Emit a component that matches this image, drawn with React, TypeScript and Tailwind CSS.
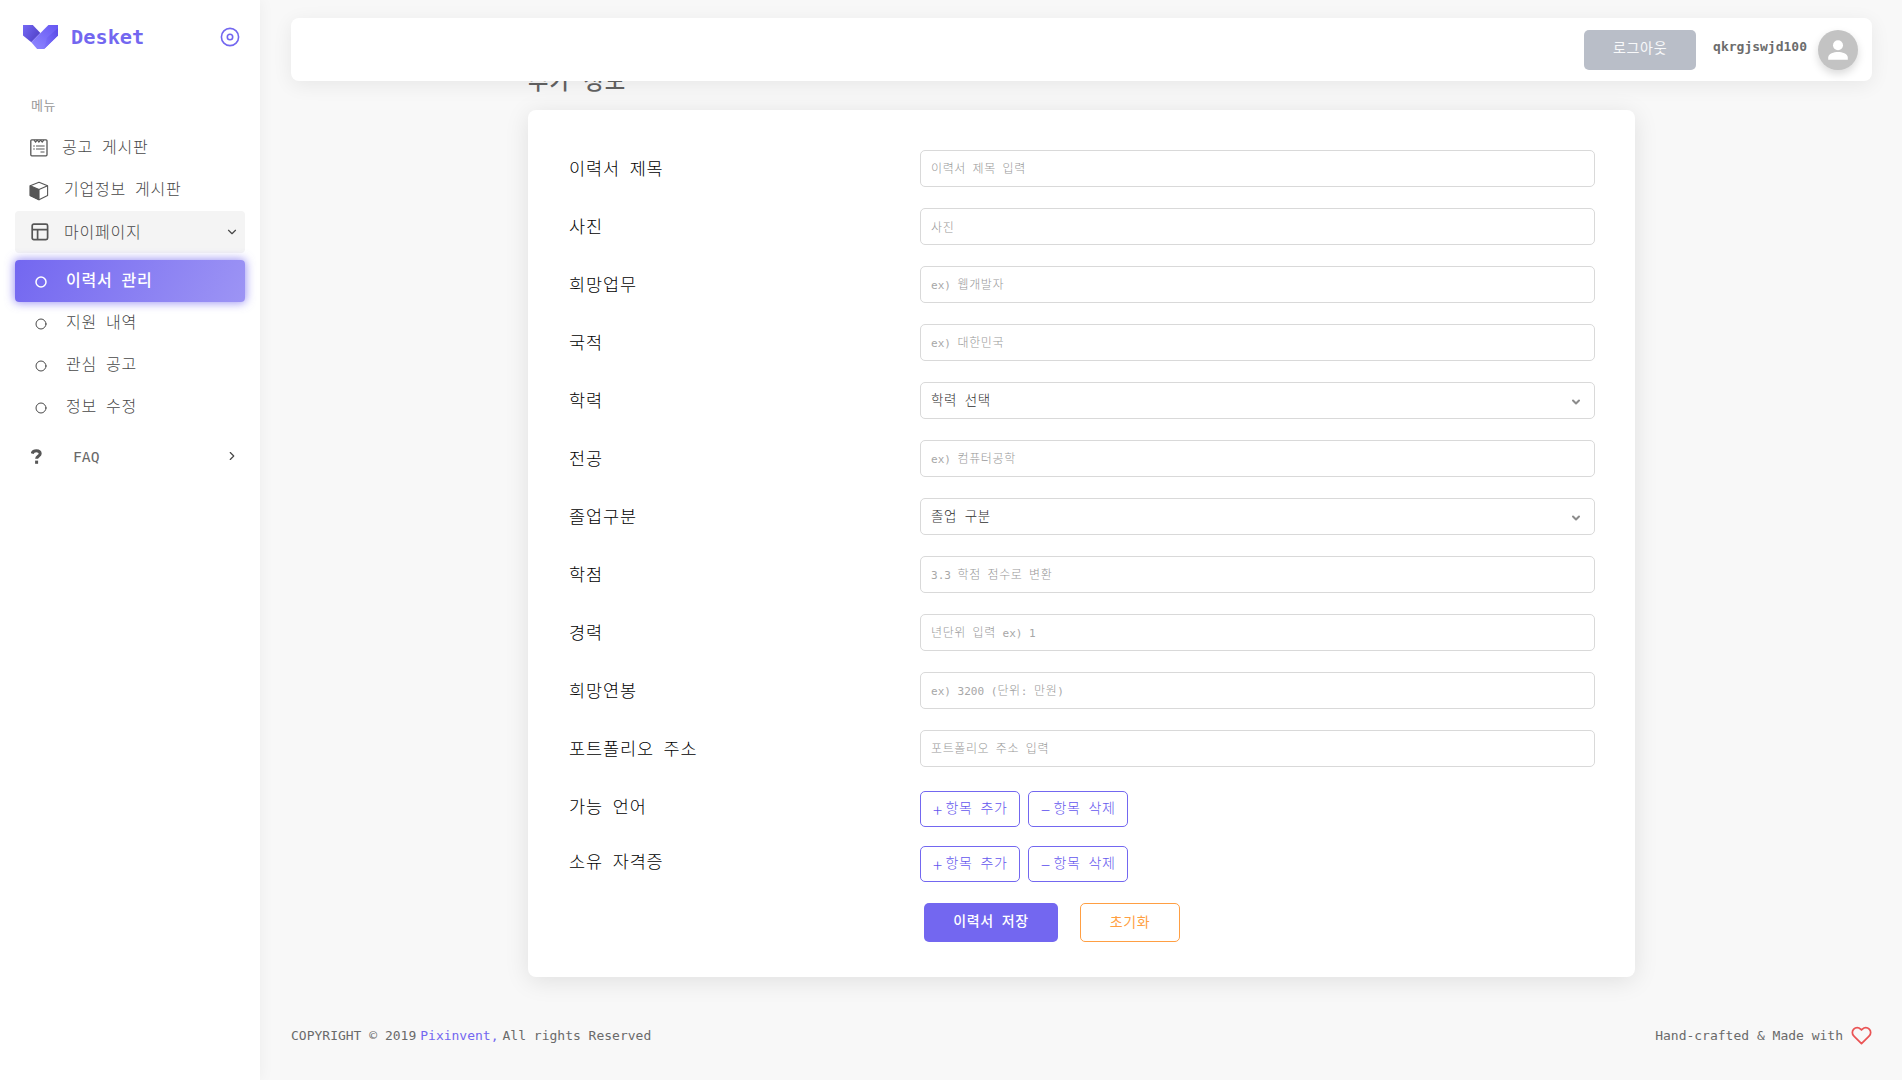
import React from "react";
import { FiCircle, FiChevronRight, FiChevronDown, FiHeart } from "react-icons/fi";

type TextProps = { children: string; className?: string };

/* Hangul runs and Latin/space runs use separate fonts so the text keeps a monospaced rhythm. */
function Mixed({ children, className = "" }: TextProps) {
  const runs = children.match(/[\uAC00-\uD7A3]+|[^\uAC00-\uD7A3]+/g) ?? [];
  return (
    <span className={`whitespace-pre ${className}`}>
      {runs.map((run, i) =>
        /[\uAC00-\uD7A3]/.test(run) ? (
          <span key={i} className="tracking-[0.05em]">{run}</span>
        ) : (
          <span key={i} className="font-['DejaVu_Sans_Mono',monospace] text-[0.92em] opacity-85">{run}</span>
        )
      )}
    </span>
  );
}

function Logo() {
  return (
    <svg width="35" height="24" viewBox="0 0 139 95" className="shrink-0">
      <defs>
        <linearGradient id="foldLeft" x1="0" y1="0" x2="1" y2="0.6">
          <stop offset="0" stopColor="#7569f5" />
          <stop offset="1" stopColor="#5142c8" />
        </linearGradient>
        <linearGradient id="foldMain" x1="1" y1="0" x2="0.1" y2="1">
          <stop offset="0" stopColor="#6657f2" />
          <stop offset="1" stopColor="#8d85ff" />
        </linearGradient>
        <linearGradient id="foldRight" x1="1" y1="0" x2="0" y2="0.8">
          <stop offset="0" stopColor="#5a4be6" />
          <stop offset="1" stopColor="#7c71fb" />
        </linearGradient>
      </defs>
      <path d="M0 0H39L69 32L33 68L0 42Z" fill="url(#foldLeft)" />
      <path d="M101 0H139V42L84 95H56L33 68Z" fill="url(#foldMain)" />
      <path d="M139 12L95 50L84 95L139 42Z" fill="url(#foldRight)" />
    </svg>
  );
}

function NotesIcon() {
  return (
    <svg width="18" height="18" viewBox="0 0 18 18" fill="none" stroke="#565656" strokeWidth="1.3">
      <rect x="0.8" y="0.8" width="16.2" height="16" rx="1" />
      <path d="M4 1.2l1.6 2 1.6-2M7.3 1.2l1.6 2 1.6-2M10.6 1.2l1.6 2 1.6-2" strokeWidth="1.1" />
      <path d="M3.2 7h1.6M6 7h8.6M3.2 10h1.6M6 10h8.6M10.5 13h4" strokeWidth="1.2" />
    </svg>
  );
}

function BoxIcon() {
  return (
    <svg width="20" height="20" viewBox="0 0 20 20" fill="none" stroke="#565656" strokeWidth="1.1" strokeLinejoin="round">
      <path d="M10 1.2L18.6 4.8V14.6L10 18.8L1.2 14.6V4.8Z" />
      <path d="M10 8.6L1.2 4.8V14.6L10 18.8Z" fill="#565656" />
      <path d="M10 8.6L18.6 4.8" />
    </svg>
  );
}

function LayoutIcon() {
  return (
    <svg width="18" height="18" viewBox="0 0 18 18" fill="none" stroke="#565656" strokeWidth="1.7">
      <rect x="1.2" y="1.2" width="15.4" height="15.4" rx="1.6" />
      <path d="M1.2 6.6H16.6M6.6 6.6V16.6" />
    </svg>
  );
}

function SubItem({ label, active = false }: { label: string; active?: boolean }) {
  return (
    <a
      className={
        active
          ? "flex h-[42px] items-center rounded bg-[linear-gradient(118deg,#7367f0,rgba(115,103,240,0.7))] pl-5 text-white shadow-[0_0_10px_1px_rgba(115,103,240,0.7)]"
          : "flex h-[42px] items-center pl-5 text-[#484848]"
      }
    >
      <FiCircle size={12} className="mt-[2px] mr-[19px]" strokeWidth={active ? 3 : 2} />
      <Mixed className={active ? "pb-[3px] text-[16px] font-medium" : "pb-[3px] text-[16px] font-light"}>{label}</Mixed>
    </a>
  );
}

function Sidebar() {
  return (
    <aside className="z-20 flex h-full w-[260px] shrink-0 flex-col bg-white text-[#484848] shadow-[0_0_15px_0_rgba(0,0,0,0.05)]">
      <div className="flex h-[74px] items-center pl-[23px] pr-5">
        <Logo />
        <span className="ml-[13px] font-['DejaVu_Sans_Mono',monospace] text-[20.3px] font-bold text-[#7367f0]">Desket</span>
        <svg width="20" height="20" viewBox="0 0 20 20" className="ml-auto" fill="none" stroke="#7367f0" strokeWidth="1.6">
          <circle cx="10" cy="10" r="8.6" />
          <circle cx="10" cy="10" r="2.7" />
        </svg>
      </div>
      <div className="mt-[17px] flex h-7 items-center pl-[31px] text-[13px] text-[#999]">
        <Mixed>메뉴</Mixed>
      </div>
      <nav className="mt-[8px] flex flex-col px-[15px] text-[16px] font-light">
        <a className="flex h-[42px] items-center pl-[15px]">
          <NotesIcon />
          <Mixed className="ml-[14px] pb-[2px]">공고 게시판</Mixed>
        </a>
        <a className="flex h-[42px] items-center pl-[14px]">
          <span className="mt-[2px]"><BoxIcon /></span>
          <Mixed className="ml-[15px] pb-[3px]">기업정보 게시판</Mixed>
        </a>
        <a className="flex h-[42px] items-center rounded bg-[#f4f4f4] pl-4 pr-[6px]">
          <LayoutIcon />
          <Mixed className="ml-[15px] pb-[3px]">마이페이지</Mixed>
          <FiChevronDown size={14} className="ml-auto" />
        </a>
        <div className="mt-[7px] flex flex-col">
          <SubItem label="이력서 관리" active />
          <SubItem label="지원 내역" />
          <SubItem label="관심 공고" />
          <SubItem label="정보 수정" />
        </div>
        <a className="mt-[7px] flex h-[42px] items-center pl-4 pr-[6px]">
          <svg width="11" height="15" viewBox="0 0 11 15" fill="none" stroke="#565656" strokeWidth="3">
            <path d="M1.2 4.6C1.6 2.6 3 1.7 5.3 1.7C7.8 1.7 9.2 2.9 9.2 4.7C9.2 6.9 5.6 7 5.6 9.8" />
            <path d="M5.6 11.6V14.8" />
          </svg>
          <Mixed className="ml-[31px] pb-px text-[#505050]">FAQ</Mixed>
          <FiChevronRight size={14} className="ml-auto" />
        </a>
      </nav>
    </aside>
  );
}

const fields: { label: string; hint: string; select?: boolean }[] = [
  { label: "이력서 제목", hint: "이력서 제목 입력" },
  { label: "사진", hint: "사진" },
  { label: "희망업무", hint: "ex) 웹개발자" },
  { label: "국적", hint: "ex) 대한민국" },
  { label: "학력", hint: "학력 선택", select: true },
  { label: "전공", hint: "ex) 컴퓨터공학" },
  { label: "졸업구분", hint: "졸업 구분", select: true },
  { label: "학점", hint: "3.3 학점 점수로 변환" },
  { label: "경력", hint: "년단위 입력 ex) 1" },
  { label: "희망연봉", hint: "ex) 3200 (단위: 만원)" },
  { label: "포트폴리오 주소", hint: "포트폴리오 주소 입력" },
];

function Label({ children }: { children: string }) {
  return (
    <div className="w-[351px] shrink-0 text-[17.5px] font-light text-black">
      <Mixed>{children}</Mixed>
    </div>
  );
}

function ItemButton({ sign, text }: { sign: string; text: string }) {
  return (
    <button className="flex h-9 w-[100px] items-center rounded-[5px] border border-[#7367f0] pb-[3px] pl-3">
      <span className="mt-[3px] w-[12.5px] text-left text-[17px] leading-none">{sign}</span>
      <Mixed>{text}</Mixed>
    </button>
  );
}

function ItemButtons() {
  return (
    <div className="flex gap-2 text-[14px] font-light text-[#6557ee]">
      <ItemButton sign="+" text="항목 추가" />
      <ItemButton sign="−" text="항목 삭제" />
    </div>
  );
}

function ResumeForm() {
  return (
    <section className="h-[867px] w-[1107px] rounded-lg bg-white pl-[41px] pr-10 pt-10 shadow-[0_4px_25px_0_rgba(0,0,0,0.1)]">
      <div className="flex flex-col gap-[21px]">
        {fields.map((f) => (
          <div key={f.label} className="flex h-[37px] items-center">
            <Label>{f.label}</Label>
            <div
              className={
                f.select
                  ? "flex h-full flex-1 items-center justify-between rounded-[5px] border border-[#d9d9d9] pl-2.5 pr-3 pb-[2px] text-[13.5px] font-light text-[#303030]"
                  : "flex h-full flex-1 items-center rounded-[5px] border border-[#d9d9d9] pl-2.5 text-[12px] font-light text-[#989898]"
              }
            >
              <Mixed>{f.hint}</Mixed>
              {f.select && <FiChevronDown size={12} strokeWidth={4} className="mt-[5px] text-[#8c8c8c]" />}
            </div>
          </div>
        ))}
      </div>
      <div className="mt-6 flex h-9 items-start">
        <div className="pt-[2px]"><Label>가능 언어</Label></div>
        <ItemButtons />
      </div>
      <div className="mt-[19px] flex h-9 items-start">
        <div className="pt-[2px]"><Label>소유 자격증</Label></div>
        <ItemButtons />
      </div>
      <div className="mt-[21px] flex gap-[22px] pl-[355px] text-[14px]">
        <button className="h-[39px] w-[134px] rounded-[5px] bg-[#7367f0] pb-[3px] font-medium text-white">
          <Mixed>이력서 저장</Mixed>
        </button>
        <button className="h-[39px] w-[100px] rounded-[5px] border border-[#ff9f43] pb-[3px] text-[#ff9f43]">
          <Mixed>초기화</Mixed>
        </button>
      </div>
    </section>
  );
}

export default function App() {
  return (
    <div className="flex h-[1080px] w-[1902px] overflow-hidden bg-[#f8f8f8] font-['Noto_Sans_CJK_KR',sans-serif] leading-normal">
      <Sidebar />
      <main className="flex flex-1 flex-col pl-[31px] pr-[30px] pt-[18px]">
        <header className="z-10 flex h-[63px] shrink-0 items-center justify-end rounded-lg bg-white pr-3.5 shadow-[0_4px_20px_0_rgba(0,0,0,0.07)]">
          <button className="h-10 w-28 rounded-[5px] bg-[#b9bec8] pb-1 text-[14px] text-white/90">
            <Mixed>로그아웃</Mixed>
          </button>
          <span className="ml-[17px] pb-1.5 font-['DejaVu_Sans_Mono',monospace] text-[13px] font-bold text-[#6c6c6c]">qkrgjswjd100</span>
          <svg width="40" height="40" viewBox="0 0 40 40" className="ml-[11px] rounded-full bg-[#c3c3c3] shadow-[0_4px_8px_0_rgba(0,0,0,0.15)]">
            <circle cx="20" cy="15.3" r="5" fill="#fff" />
            <path d="M10.2 29.7V27.4C10.2 23.8 16 22 20 22S29.8 23.8 29.8 27.4V29.7Z" fill="#fff" />
          </svg>
        </header>
        <div className="ml-[237px] mt-[-18px] flex h-[47px] shrink-0 items-center pb-3 text-[22.2px] font-medium leading-none text-[#626262]">
          <Mixed>추가 정보</Mixed>
        </div>
        <div className="ml-[237px]">
          <ResumeForm />
        </div>
        <footer className="mt-[45px] flex h-7 items-center justify-between font-['DejaVu_Sans_Mono',monospace] text-[13px] text-[#6a6a6a]">
          <p className="flex gap-1">
            <span>COPYRIGHT © 2019</span>
            <span className="text-[#7367f0]">Pixinvent,</span>
            <span>All rights Reserved</span>
          </p>
          <p className="flex items-center gap-2">
            <span>Hand-crafted &amp; Made with</span>
            <FiHeart size={21} className="mb-[2px] text-[#ea5455]" />
          </p>
        </footer>
      </main>
    </div>
  );
}
